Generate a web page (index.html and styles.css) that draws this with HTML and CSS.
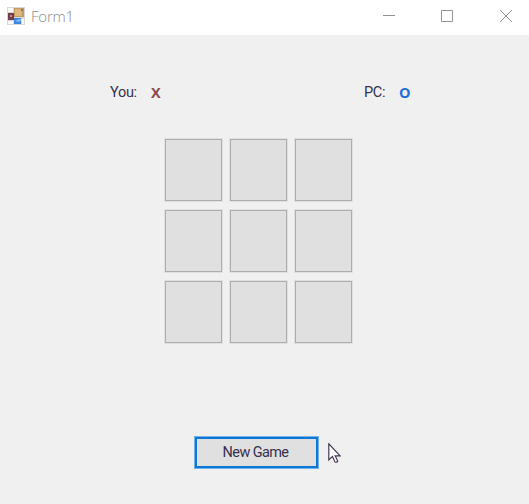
FILE: index.html
```html
<!DOCTYPE html>
<html lang="en">
<head>
<meta charset="utf-8">
<title>Form1</title>
<link rel="stylesheet" href="styles.css">
</head>
<body>
<div class="window">
  <header class="titlebar">
    <svg class="app-icon" width="18" height="18" viewBox="0 0 18 18">
      <rect width="18" height="18" fill="#d8d8d8"/>
      <path d="M1 1h5v4H1zM1 14h5v3H1zM15 12h2v5h-2z" fill="#fafafa"/>
      <rect x="7" y="1" width="10" height="9" fill="#c29a63"/>
      <rect x="8" y="2" width="7" height="7" fill="#dfb77d"/>
      <rect x="14" y="2" width="2" height="2" fill="#9c6c50"/>
      <rect x="1" y="6" width="6" height="7" fill="#763c4a"/>
      <rect x="3" y="8" width="2" height="2" fill="#c1949c"/>
      <rect x="7" y="11" width="7" height="6" fill="#3e86dc"/>
      <path d="M8 14l4-2h2v2l-3 1z" fill="#7db6f1"/>
    </svg>
    <span class="title">Form1</span>
    <nav class="controls">
      <svg width="12" height="12" viewBox="0 0 12 12"><path d="M0 5.5h12"/></svg>
      <svg width="12" height="12" viewBox="0 0 12 12"><path d="M.5.5h11v11H.5z"/></svg>
      <svg width="12" height="12" viewBox="0 0 12 12"><path d="M0 0l12 12M12 0L0 12"/></svg>
    </nav>
  </header>
  <main class="form">
    <div class="players">
      <div class="player"><span class="label you">You:</span><b class="mark mark-x">X</b></div>
      <div class="player"><span class="label pc">PC:</span><b class="mark mark-o">O</b></div>
    </div>
    <div class="board">
      <button class="cell"></button><button class="cell"></button><button class="cell"></button>
      <button class="cell"></button><button class="cell"></button><button class="cell"></button>
      <button class="cell"></button><button class="cell"></button><button class="cell"></button>
    </div>
    <button class="new-game">New Game</button>
  </main>
  <svg class="cursor" width="13" height="21" viewBox="0 0 13 21">
    <path d="M.8.8v16l3.7-3.4 2.5 5.5q1.6 1 2.7-.8l-2.5-5.3h4.9z"/>
  </svg>
</div>
</body>
</html>
```
FILE: styles.css
```css
* { box-sizing: border-box; }
body { margin: 0; }
.window {
  position: relative;
  width: 529px;
  height: 504px;
  overflow: hidden;
  background: #f0f0f0;
  font-family: Roboto, "Liberation Sans", sans-serif;
}
.titlebar {
  display: flex;
  align-items: center;
  height: 35px;
  padding: 0 17px 4px 7px;
  background: #fff;
}
.app-icon { margin-right: 6px; }
.title {
  color: #8c8c8c;
  font: 300 15px/20px "Open Sans", sans-serif;
  letter-spacing: -0.2px;
}
.controls {
  display: flex;
  gap: 47px;
  margin-left: auto;
}
.controls svg:first-child { margin-right: -1px; }
.controls svg { fill: none; stroke: #929297; }
.form {
  display: flex;
  flex-direction: column;
  align-items: flex-start;
}
.players {
  display: flex;
  height: 18px;
  margin-top: 49px;
  padding-left: 110px;
  line-height: 18px;
  font-size: 14.5px;
  color: #35304f;
}
.player { display: flex; width: 254px; }
.label { white-space: nowrap; letter-spacing: -0.3px; }
.you { width: 41px; }
.pc { width: 35px; }
.mark { font-family: "Open Sans", sans-serif; }
.mark-x { color: #8b4b4c; }
.mark-o { color: #236edb; }
.board {
  display: grid;
  grid-template-columns: repeat(3, 57px);
  grid-template-rows: repeat(3, 62px);
  gap: 9px 8px;
  margin: 37px 0 0 165px;
}
.cell {
  padding: 0;
  border: 1px solid #adadad;
  background: #e0e0e0;
  box-shadow: 0 0 0 1px #e0e0e0;
}
.new-game {
  width: 123px;
  height: 31px;
  margin: 94px 0 0 195px;
  padding: 0 2px 0 0;
  border: 2px solid #0b78d7;
  background: #e0e0e0;
  box-shadow: 0 0 0 1px #74b1e8;
  color: #35304f;
  font: 14.5px/18px Roboto, sans-serif;
  letter-spacing: -0.6px;
}
.cursor {
  position: absolute;
  left: 328px;
  top: 443px;
  fill: #fff;
  stroke: #453852;
  stroke-width: 1.2;
}
```
